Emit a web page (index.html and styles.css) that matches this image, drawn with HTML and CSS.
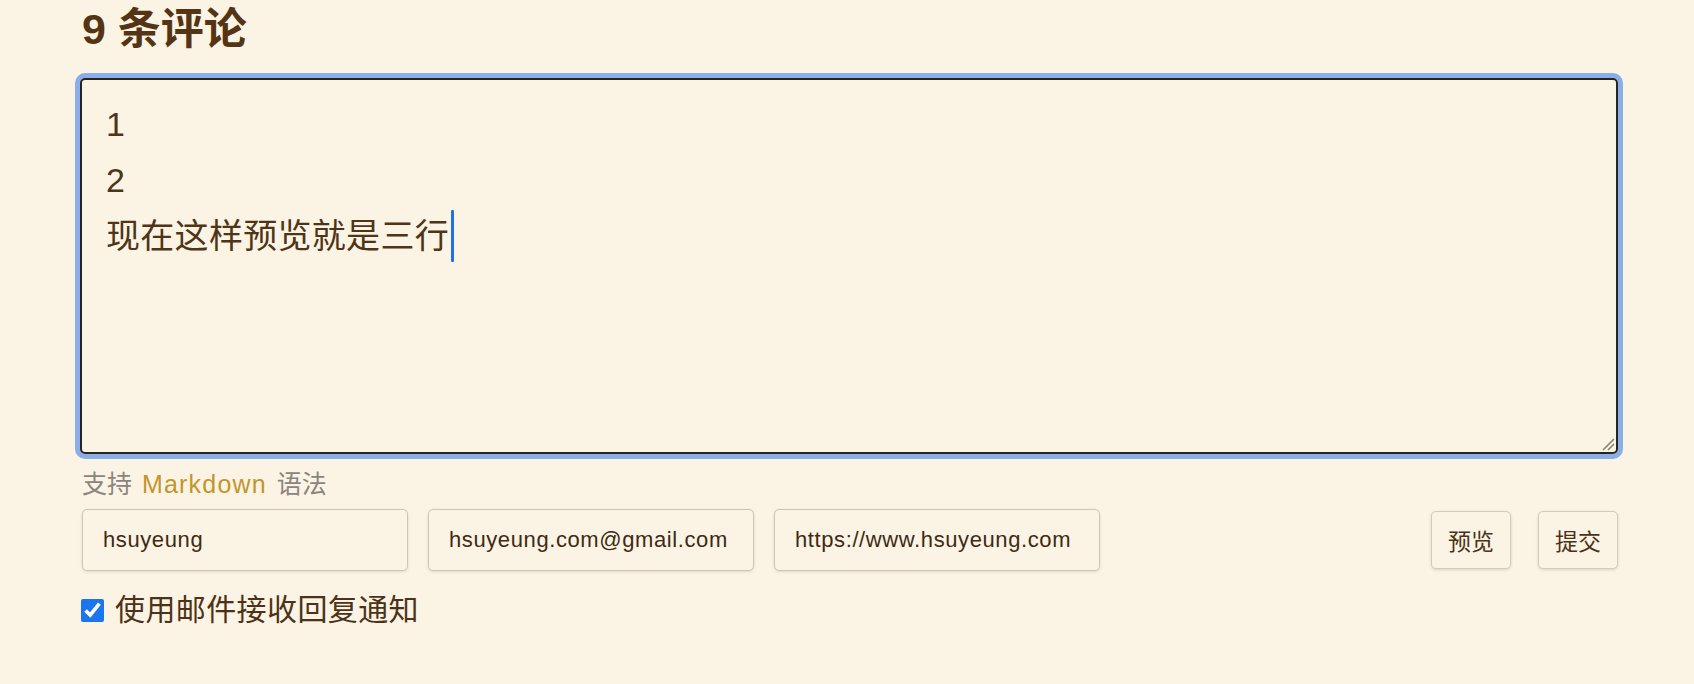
FILE: index.html
```html
<!DOCTYPE html>
<html lang="zh-CN">
<head>
<meta charset="utf-8">
<title>评论</title>
<link rel="stylesheet" href="styles.css">
</head>
<body>
<section class="comments">
  <h2 class="comments-title">9 条评论</h2>
  <div class="editor">
    <div class="editor-line">1</div>
    <div class="editor-line">2</div>
    <div class="editor-line">现在这样预览就是三行<span class="caret"></span></div>
    <svg class="grip" width="14" height="14" viewBox="0 0 14 14"><path d="M2 13 L13 2 M7 13 L13 7" stroke="#8a8378" stroke-width="1.6" fill="none"/></svg>
  </div>
  <p class="hint">支持 <span class="hint-link">Markdown</span> 语法</p>
  <div class="fields">
    <input class="field" type="text" value="hsuyeung">
    <input class="field" type="text" value="hsuyeung.com@gmail.com">
    <input class="field" type="text" value="https://www.hsuyeung.com">
    <div class="actions">
      <button class="btn" type="button">预览</button>
      <button class="btn" type="button">提交</button>
    </div>
  </div>
  <label class="notify">
    <input class="notify-box" type="checkbox" checked>
    <span>使用邮件接收回复通知</span>
  </label>
</section>
</body>
</html>
```

FILE: styles.css
```css
html, body {
  margin: 0;
  padding: 0;
  background: #fbf4e4;
}

body {
  font-family: "Liberation Sans", "Noto Sans CJK SC", sans-serif;
  color: #4d3217;
}

.comments {
  padding-left: 82px;
  width: 1536px;
}

.comments-title {
  margin: 5px 0 0 0;
  font-size: 43px;
  line-height: 48px;
  font-weight: bold;
  color: #543415;
}

.editor {
  position: relative;
  margin: 25px 0 0 -2px;
  box-sizing: border-box;
  width: 1538px;
  height: 376px;
  border: 2px solid #262420;
  border-radius: 5px;
  box-shadow: 0 0 0 5px #8aaee8;
  padding: 16px 24px;
  font-size: 34px;
  line-height: 56px;
  color: #4f3418;
}

.editor-line {
  white-space: nowrap;
  letter-spacing: 0.3px;
}

.caret {
  display: inline-block;
  width: 3px;
  height: 52px;
  background: #1f72e6;
  vertical-align: -14px;
  margin-left: 2px;
  border-radius: 1px;
}

.grip {
  position: absolute;
  right: 1px;
  bottom: 1px;
}

.hint {
  margin: 15px 0 0 0;
  font-size: 25px;
  line-height: 30px;
  word-spacing: 3px;
  color: #8a8580;
}

.hint-link {
  color: #c4952b;
  letter-spacing: 1.2px;
}

.fields {
  display: flex;
  align-items: center;
  gap: 20px;
  margin-top: 10px;
}

.field {
  box-sizing: border-box;
  width: 326px;
  height: 62px;
  margin: 0;
  padding: 0 0 0 20px;
  border: 1.5px solid #cdc5b5;
  border-radius: 5px;
  background: #fbf4e4;
  box-shadow: 0 1px 3px rgba(80, 60, 30, 0.15);
  font-family: "Liberation Sans", "Noto Sans CJK SC", sans-serif;
  font-size: 22px;
  letter-spacing: 0.6px;
  color: #3f2a13;
  outline: none;
}

.actions {
  margin-left: auto;
  display: flex;
  gap: 27px;
}

.btn {
  box-sizing: border-box;
  width: 80px;
  height: 58px;
  margin: 0;
  padding: 0;
  border: 1.5px solid #d3cbbb;
  border-radius: 5px;
  background: #fbf4e4;
  box-shadow: 0 1px 3px rgba(80, 60, 30, 0.18);
  font-family: "Liberation Sans", "Noto Sans CJK SC", sans-serif;
  font-size: 23px;
  color: #4a3117;
}

.notify {
  display: flex;
  align-items: center;
  gap: 11px;
  margin-top: 24px;
  font-size: 30px;
  line-height: 30px;
  letter-spacing: 0.4px;
  color: #4d3217;
}

.notify-box {
  width: 23px;
  height: 23px;
  margin: 0 0 0 -1px;
  accent-color: #1a75ee;
}
```
